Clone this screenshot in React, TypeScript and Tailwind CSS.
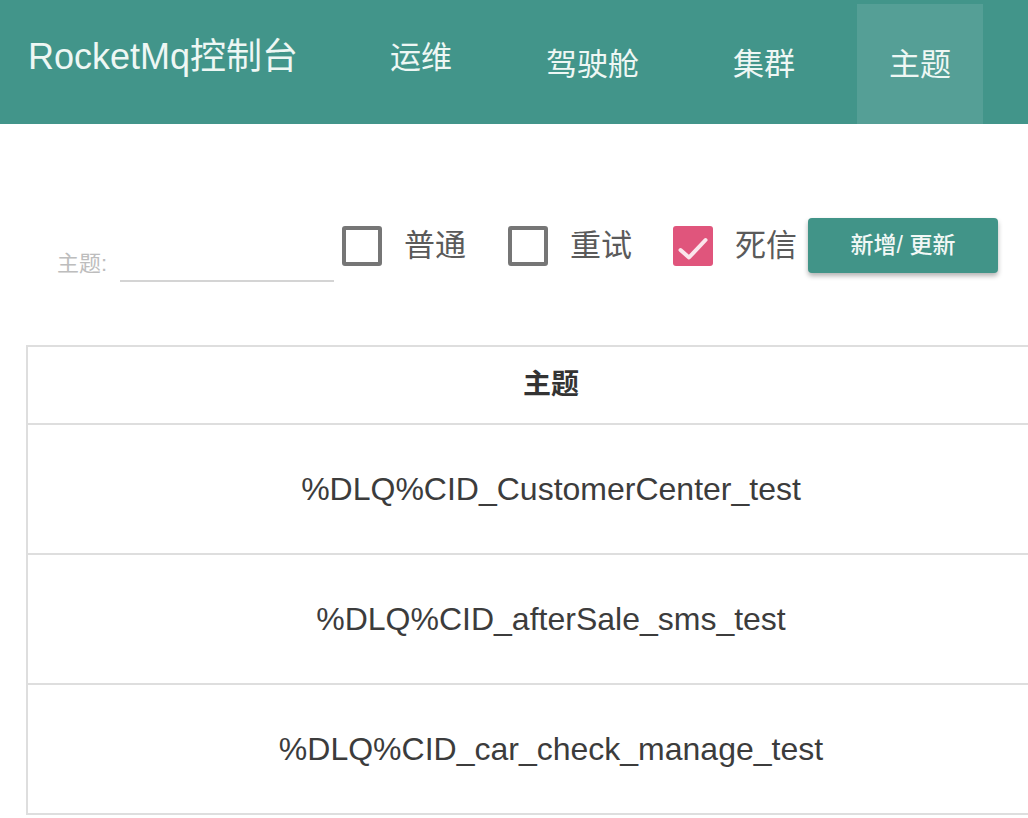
import React from "react";

const cjk = '"Liberation Sans", "Noto Sans CJK SC", sans-serif';

function Box({ checked }: { checked?: boolean }) {
  if (checked) {
    return (
      <div className="w-[40px] h-[40px] rounded-[3px] bg-[#e0557c] shrink-0">
        <svg width="40" height="40" viewBox="0 0 40 40">
          <path d="M7.5 24 L16 31.5 L32.5 14" fill="none" stroke="#fbe6ec" strokeWidth="4" strokeLinecap="round" strokeLinejoin="round" />
        </svg>
      </div>
    );
  }
  return <div className="w-[40px] h-[40px] rounded-[3px] border-[4px] border-[#767676] shrink-0" />;
}

const rows = [
  "%DLQ%CID_CustomerCenter_test",
  "%DLQ%CID_afterSale_sms_test",
  "%DLQ%CID_car_check_manage_test",
];

export default function App() {
  return (
    <div className="w-[1028px] h-[818px] overflow-hidden bg-white" style={{ fontFamily: cjk }}>
      <div className="h-[124px] bg-[#42958a] flex items-stretch text-[#eef7f4]">
        <div className="pl-[28px] flex items-center pb-[10px] text-[36px] leading-none whitespace-nowrap">
          RocketMq控制台
        </div>
        <div className="ml-[60px] flex gap-[32px] pt-[4px]">
          <div className="pl-[32px] pr-[30px] flex items-center pb-[14px] text-[31px] leading-none whitespace-nowrap">运维</div>
          <div className="pl-[32px] pr-[30px] flex items-center text-[31px] leading-none whitespace-nowrap">驾驶舱</div>
          <div className="pl-[32px] pr-[30px] flex items-center text-[31px] leading-none whitespace-nowrap">集群</div>
          <div className="pl-[32px] pr-[32px] flex items-center bg-[#559f96] text-[31px] leading-none whitespace-nowrap">主题</div>
        </div>
      </div>

      <div className="mt-[94px] h-[55px] flex items-center pl-[57px]">
        <div className="self-start h-[64px] flex items-end">
          <div className="text-[22px] leading-none text-[#bdbdbd] pb-[7px] w-[53px] whitespace-nowrap">主题:</div>
          <div className="ml-[10px] w-[214px] h-[30px] border-b-2 border-[#d4d4d4]" />
        </div>
        <div className="ml-[8px] flex items-center">
          <Box />
          <span className="ml-[22px] text-[31px] leading-none text-[#5a5a5a]">普通</span>
        </div>
        <div className="ml-[42px] flex items-center">
          <Box />
          <span className="ml-[22px] text-[31px] leading-none text-[#5a5a5a]">重试</span>
        </div>
        <div className="ml-[41px] flex items-center">
          <Box checked />
          <span className="ml-[22px] text-[31px] leading-none text-[#5a5a5a]">死信</span>
        </div>
        <button className="ml-[11px] w-[190px] h-[55px] rounded-[4px] bg-[#419488] text-[#f2f8f6] text-[23px] font-medium shadow-[0_3px_5px_rgba(0,0,0,0.3)] flex items-center justify-center">
          新增/ 更新
        </button>
      </div>

      <div className="mt-[72px] ml-[26px] w-[1048px] border-l-2 border-t-2 border-[#dedede]">
        <div className="h-[78px] border-b-2 border-[#dedede] flex items-center justify-center text-[28px] font-bold text-[#333]">
          主题
        </div>
        {rows.map((r) => (
          <div key={r} className="h-[130px] border-b-2 border-[#dedede] flex items-center justify-center text-[32px] text-[#3c3c3c]">
            {r}
          </div>
        ))}
      </div>
    </div>
  );
}
